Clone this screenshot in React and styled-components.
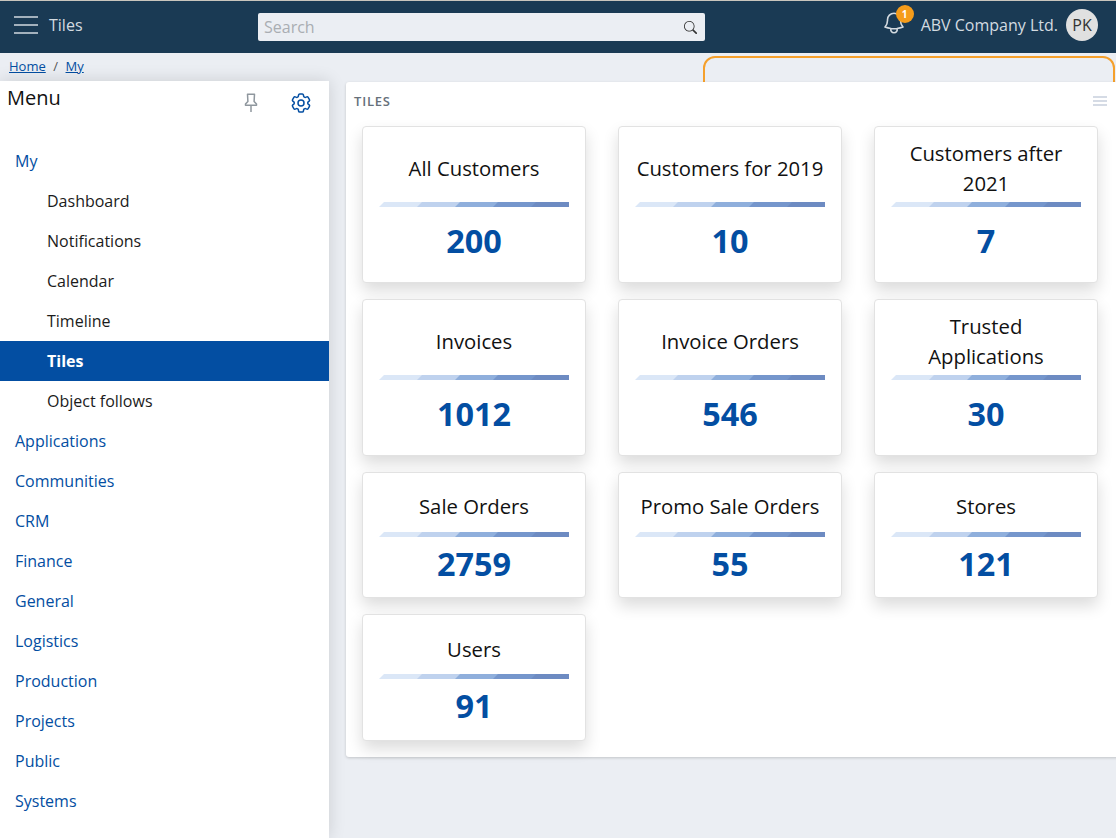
import React from "react";
import styled, { createGlobalStyle } from "styled-components";
import { BsSearch } from "react-icons/bs";
import { HiOutlineBell, HiOutlineCog6Tooth } from "react-icons/hi2";

const menu = [
  { label: "My", open: true },
  { label: "Dashboard", sub: true },
  { label: "Notifications", sub: true },
  { label: "Calendar", sub: true },
  { label: "Timeline", sub: true },
  { label: "Tiles", sub: true, active: true },
  { label: "Object follows", sub: true },
  { label: "Applications" },
  { label: "Communities" },
  { label: "CRM" },
  { label: "Finance" },
  { label: "General" },
  { label: "Logistics" },
  { label: "Production" },
  { label: "Projects" },
  { label: "Public" },
  { label: "Systems" },
];

const tiles = [
  { title: "All Customers", value: "200", tall: true },
  { title: "Customers for 2019", value: "10", tall: true },
  { title: "Customers after 2021", value: "7", tall: true },
  { title: "Invoices", value: "1012", tall: true },
  { title: "Invoice Orders", value: "546", tall: true },
  { title: "Trusted Applications", value: "30", tall: true },
  { title: "Sale Orders", value: "2759" },
  { title: "Promo Sale Orders", value: "55" },
  { title: "Stores", value: "121" },
  { title: "Users", value: "91" },
];

const barColors = ["#dbe7f7", "#bfd2ee", "#8fafdc", "#7596cc", "#6d8bc2"];

function PinIcon() {
  return (
    <svg width="14" height="20" viewBox="0 0 14 20" fill="none" stroke="#8f979e" strokeWidth="1.5">
      <path d="M3.5 1.2h7l-.4 7.2 2.4 2.6v1.2h-11v-1.2l2.4-2.6z" strokeLinejoin="round" />
      <path d="M7 12.4v6.6" />
    </svg>
  );
}

function App() {
  return (
    <Page>
      <GlobalStyle />
      <Header>
        <HeaderLeft>
          <Burger>
            <span />
            <span />
            <span />
          </Burger>
          <PageName>Tiles</PageName>
        </HeaderLeft>
        <SearchBox>
          <SearchText>Search</SearchText>
          <BsSearch size={13} color="#333" />
        </SearchBox>
        <HeaderRight>
          <BellWrap>
            <HiOutlineBell size={26} />
            <Badge>1</Badge>
          </BellWrap>
          <Company>ABV Company Ltd.</Company>
          <Avatar>PK</Avatar>
        </HeaderRight>
      </Header>
      <Crumbs>
        <CrumbLink>Home</CrumbLink>
        <CrumbSep>/</CrumbSep>
        <CrumbLink>My</CrumbLink>
        <OrangeFrame />
      </Crumbs>
      <Body>
        <Sidebar>
          <SideHead>
            <SideTitle>Menu</SideTitle>
            <SideIcons>
              <PinIcon />
              <HiOutlineCog6Tooth size={24} color="#034ea2" />
            </SideIcons>
          </SideHead>
          <MenuList>
            {menu.map((item) => (
              <MenuItem key={item.label} $sub={item.sub} $active={item.active}>
                {item.label}
              </MenuItem>
            ))}
          </MenuList>
        </Sidebar>
        <Panel>
          <PanelHead>
            <PanelTitle>TILES</PanelTitle>
            <PanelMenu>
              <span />
              <span />
              <span />
            </PanelMenu>
          </PanelHead>
          <TileGrid>
            {tiles.map((tile) => (
              <Tile key={tile.title} $tall={tile.tall}>
                <TileTitle $tall={tile.tall}>{tile.title}</TileTitle>
                <Bar>
                  {barColors.map((c) => (
                    <BarPart key={c} $color={c} />
                  ))}
                </Bar>
                <TileValue $tall={tile.tall}>{tile.value}</TileValue>
              </Tile>
            ))}
          </TileGrid>
        </Panel>
      </Body>
    </Page>
  );
}

export default App;

const GlobalStyle = createGlobalStyle`
  html, body {
    margin: 0;
    padding: 0;
    background: #ebeef3;
    overflow: hidden;
  }
  * {
    box-sizing: border-box;
  }
`;

const Page = styled.div`
  width: 1116px;
  height: 838px;
  overflow: hidden;
  font-family: "Open Sans", sans-serif;
  font-size: 16px;
  background: #ebeef3;
  display: flex;
  flex-direction: column;
`;

const Header = styled.header`
  height: 53px;
  flex: none;
  background: #1a3a54;
  border-top: 1px solid #c9c5bd;
  display: flex;
  align-items: center;
  padding: 0 18px 4px 14px;
  color: #d3dae0;
`;

const HeaderLeft = styled.div`
  width: 244px;
  display: flex;
  align-items: center;
  gap: 11px;
`;

const Burger = styled.div`
  width: 24px;
  height: 18px;
  display: flex;
  flex-direction: column;
  justify-content: space-between;
  > span {
    height: 2px;
    background: #a3b1bd;
  }
`;

const PageName = styled.span`
  font-size: 16px;
  line-height: 22px;
`;

const SearchBox = styled.div`
  width: 447px;
  height: 28px;
  margin-top: 4px;
  background: #ebeef3;
  border-radius: 2px;
  display: flex;
  align-items: center;
  justify-content: space-between;
  padding: 0 8px 0 6px;
`;

const SearchText = styled.span`
  font-size: 16px;
  color: #a9adb2;
`;

const HeaderRight = styled.div`
  margin-left: auto;
  display: flex;
  align-items: center;
`;

const BellWrap = styled.div`
  position: relative;
  display: flex;
  width: 26px;
  margin-right: 14px;
  margin-left: -4px;
  margin-top: -5px;
`;

const Badge = styled.span`
  position: absolute;
  left: 15px;
  top: -5px;
  width: 18px;
  height: 18px;
  border-radius: 50%;
  background: #f59c1a;
  color: #fff;
  font-size: 10px;
  font-weight: 700;
  display: flex;
  align-items: center;
  justify-content: center;
`;

const Company = styled.span`
  font-size: 16px;
`;

const Avatar = styled.div`
  width: 32px;
  height: 32px;
  margin-left: 8px;
  border-radius: 50%;
  background: #e0e0e0;
  color: #333;
  font-size: 16px;
  display: flex;
  align-items: center;
  justify-content: center;
`;

const Crumbs = styled.nav`
  position: relative;
  height: 28px;
  flex: none;
  padding: 4px 0 0 9px;
  display: flex;
  align-items: flex-start;
  font-size: 13px;
  line-height: 18px;
`;

const CrumbLink = styled.a`
  color: #034ea2;
  text-decoration: underline;
`;

const CrumbSep = styled.span`
  color: #555;
  margin: 0 7.5px;
`;

const OrangeFrame = styled.div`
  position: absolute;
  left: 703px;
  top: 3px;
  width: 412px;
  height: 40px;
  border: 2px solid #f5a02c;
  border-radius: 12px;
`;

const Body = styled.div`
  flex: 1;
  display: flex;
  align-items: flex-start;
  position: relative;
`;

const Sidebar = styled.aside`
  position: relative;
  z-index: 1;
  width: 329px;
  height: 757px;
  flex: none;
  background: #fff;
  box-shadow: 0 0 16px rgba(0, 0, 0, 0.14);
`;

const SideHead = styled.div`
  height: 60px;
  padding: 4px 16px 0 7px;
  display: flex;
  justify-content: space-between;
  align-items: flex-start;
`;

const SideTitle = styled.h2`
  margin: 0;
  font-size: 20px;
  font-weight: 400;
  line-height: 26px;
  color: #111;
`;

const SideIcons = styled.div`
  display: flex;
  align-items: center;
  gap: 31px;
  margin-top: 6px;
`;

const MenuList = styled.div`
  display: flex;
  flex-direction: column;
`;

const MenuItem = styled.a`
  height: 40px;
  display: flex;
  align-items: center;
  padding-left: ${(p) => (p.$sub ? "47px" : "15px")};
  font-size: 16px;
  font-weight: ${(p) => (p.$active ? 700 : 400)};
  color: ${(p) => (p.$active ? "#fff" : p.$sub ? "#1b1b1b" : "#034ea2")};
  background: ${(p) => (p.$active ? "#034ea2" : "transparent")};
`;

const Panel = styled.section`
  margin: 1px -8px 0 17px;
  flex: 1;
  height: 675px;
  background: #fff;
  border-radius: 3px;
  box-shadow: 0 1px 3px rgba(0, 0, 0, 0.18);
  padding: 0 24px 16px 16px;
`;

const PanelHead = styled.div`
  height: 44px;
  margin-left: -8px;
  margin-right: -7px;
  padding-top: 10px;
  display: flex;
  justify-content: space-between;
`;

const PanelTitle = styled.span`
  font-size: 13px;
  font-weight: 600;
  line-height: 18px;
  letter-spacing: 0.8px;
  color: #66707a;
`;

const PanelMenu = styled.div`
  width: 14px;
  height: 10px;
  margin-top: 4px;
  display: flex;
  flex-direction: column;
  justify-content: space-between;
  > span {
    height: 2px;
    background: #d5dbe5;
  }
`;

const TileGrid = styled.div`
  display: grid;
  grid-template-columns: repeat(3, 224px);
  column-gap: 32px;
  row-gap: 16px;
`;

const Tile = styled.div`
  height: ${(p) => (p.$tall ? "156.8px" : "126.6px")};
  padding: ${(p) => (p.$tall ? "11px" : "13px")} 16px 0 16px;
  background: #fff;
  border: 1px solid #e2e2e2;
  border-radius: 4px;
  box-shadow: 0 8px 16px rgba(0, 0, 0, 0.14);
  display: flex;
  flex-direction: column;
  align-items: stretch;
`;

const TileTitle = styled.div`
  height: ${(p) => (p.$tall ? "64px" : "44px")};
  display: flex;
  align-items: center;
  justify-content: center;
  text-align: center;
  font-size: 20.3px;
  line-height: 30px;
  color: #111;
  margin-top: ${(p) => (p.$tall ? "-2px" : "-1.35px")};
  margin-bottom: ${(p) => (p.$tall ? "2px" : "3.35px")};
`;

const Bar = styled.div`
  height: 5px;
  flex: none;
  display: flex;
  overflow: hidden;
`;

const BarPart = styled.div`
  flex: 1;
  background: ${(p) => p.$color};
  transform-origin: 0 100%;
  transform: skewX(-45deg) scaleX(1.05);
`;

const TileValue = styled.div`
  margin-top: ${(p) => (p.$tall ? "11px" : "4.2px")};
  text-align: center;
  font-size: 32.4px;
  font-weight: 700;
  line-height: 44px;
  color: #034ea2;
`;
